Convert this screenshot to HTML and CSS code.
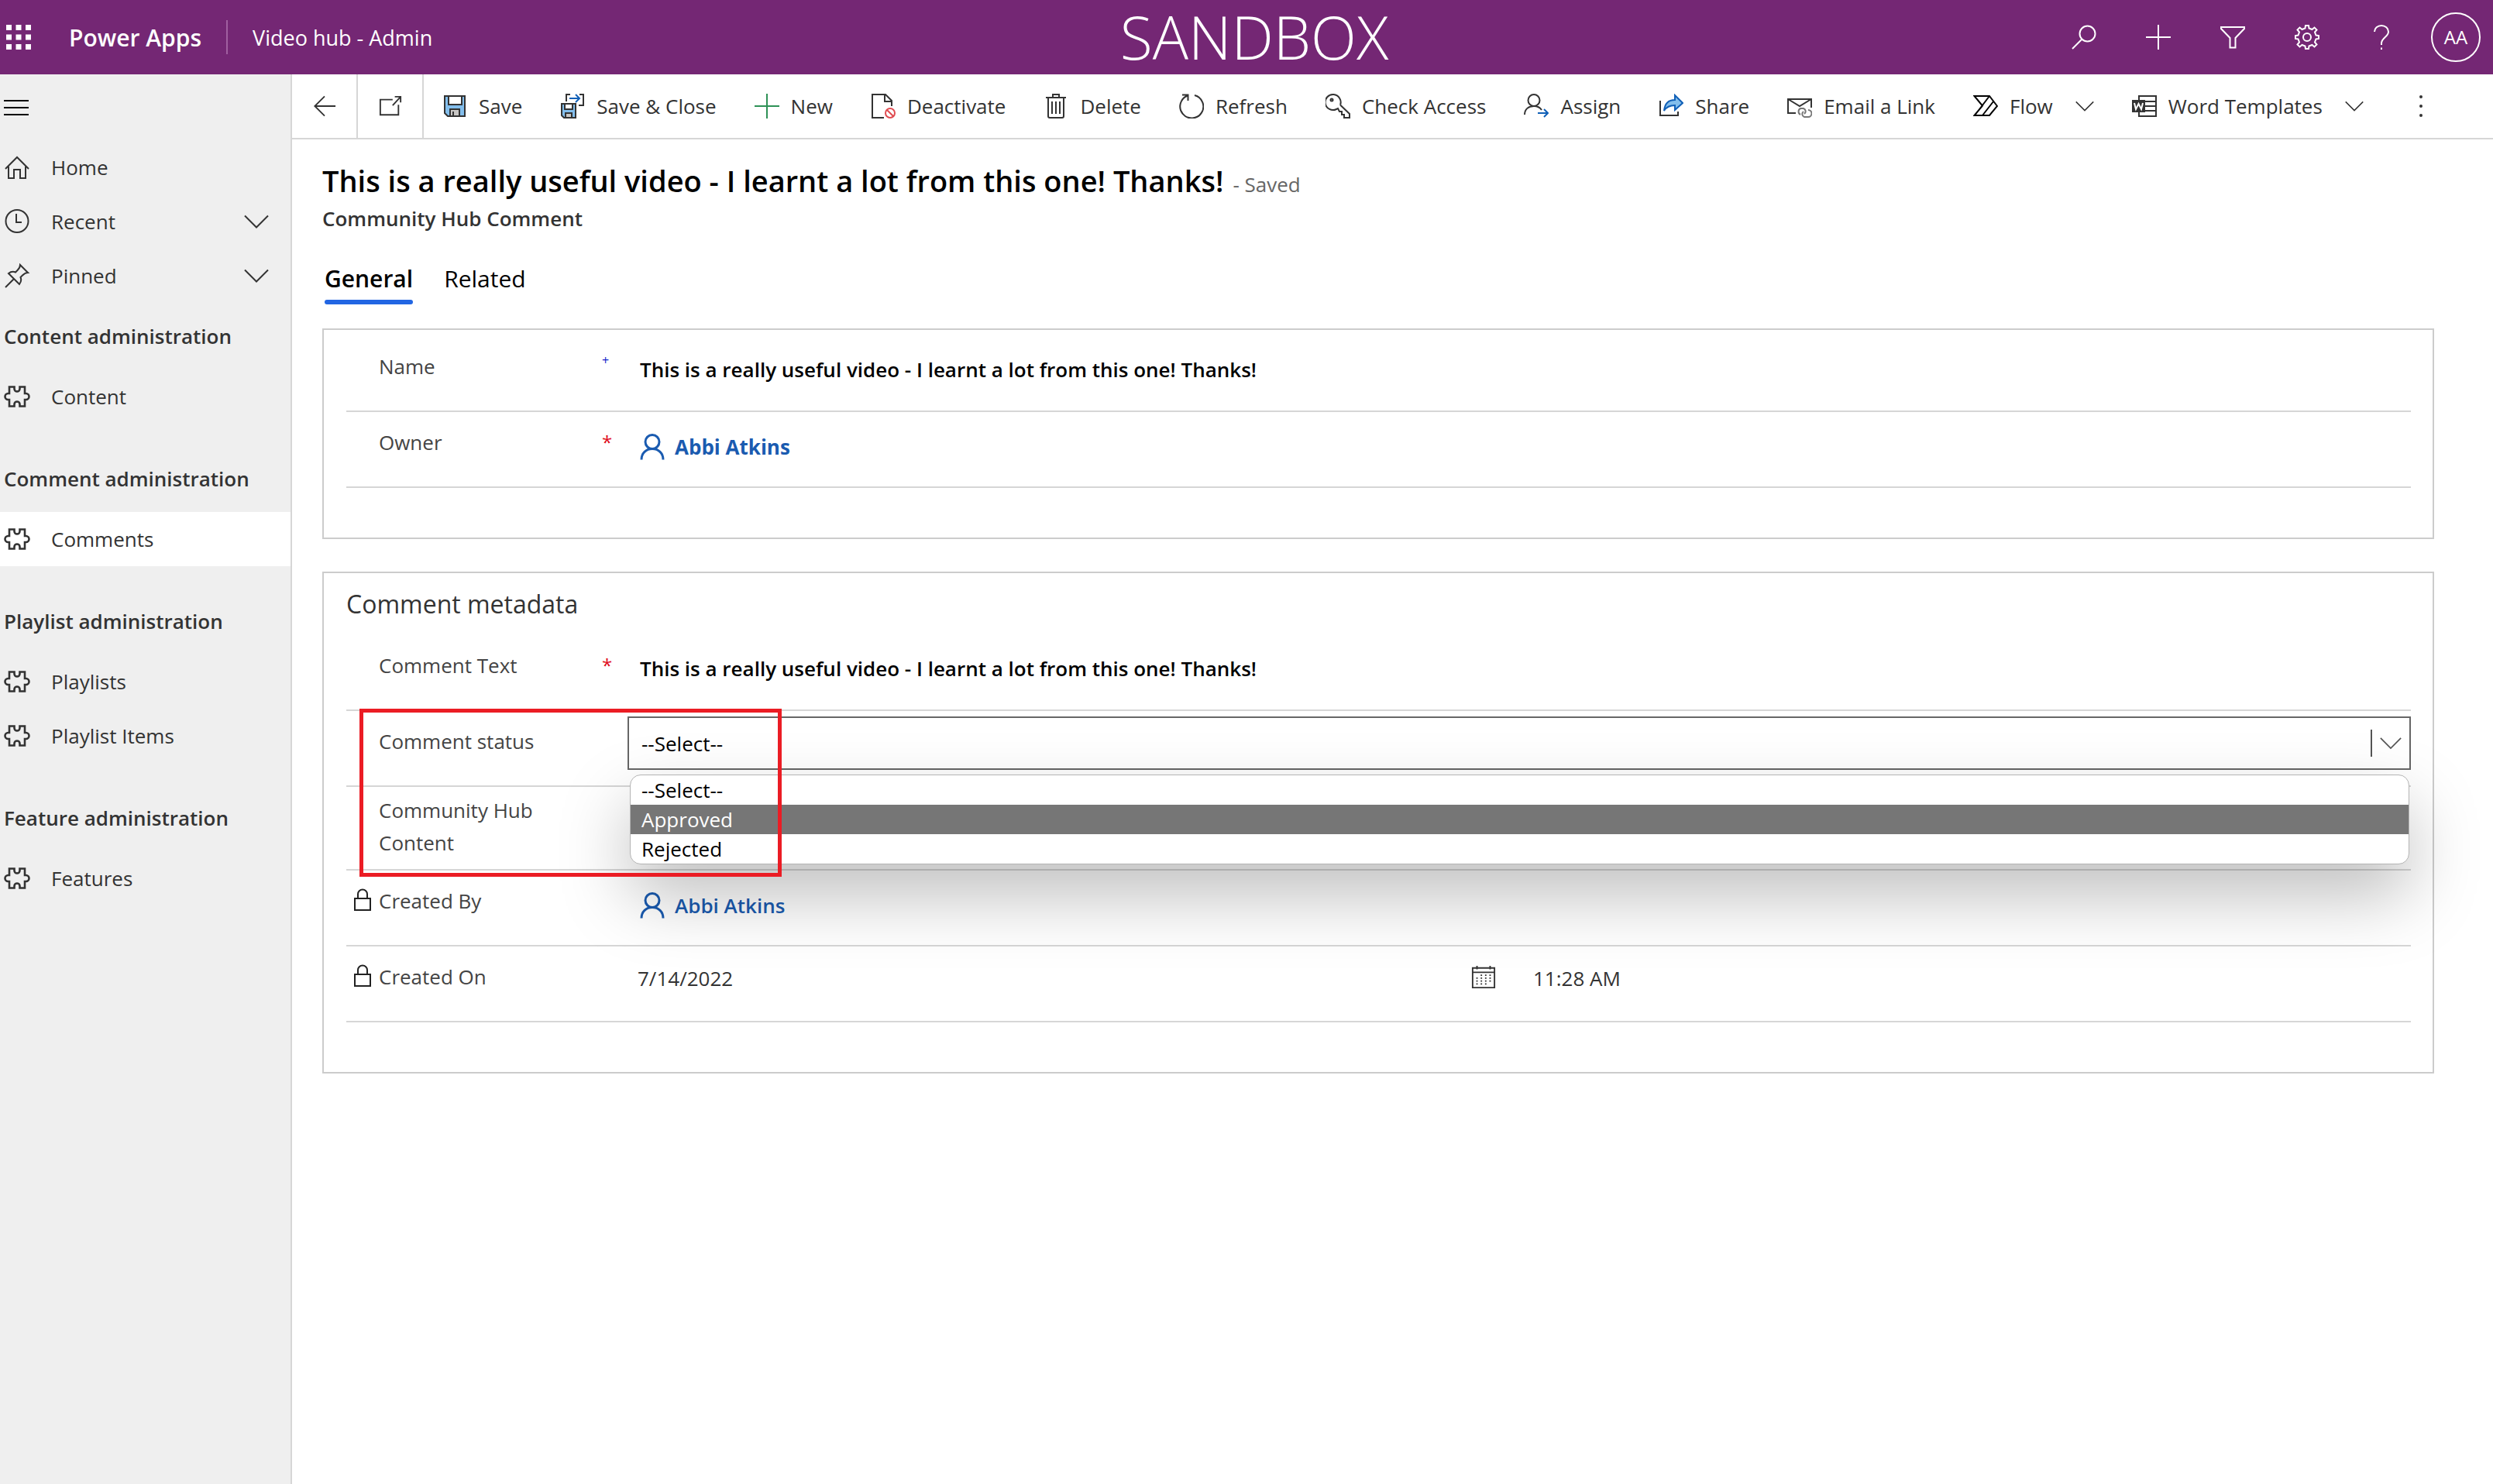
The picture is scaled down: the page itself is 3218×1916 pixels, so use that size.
FILE: index.html
```html
<!DOCTYPE html>
<html lang="en">
<head>
<meta charset="utf-8">
<title>Video hub - Admin</title>
<link rel="stylesheet" href="styles.css">
</head>
<body>
<svg class="sprite" aria-hidden="true">
  <symbol id="puzzle" viewBox="0 0 34 32"><path d="M7 3.500H13.500V6A3.500 3.500 0 0 0 20.500 6V3.500H27V12H28.500A3.800 3.800 0 0 1 28.500 20H27V28.500H20.500V26A3.500 3.500 0 0 0 13.500 26V28.500H7V20H5.500A3.800 3.800 0 0 1 5.500 12H7Z" stroke-width="2.600"/></symbol>
  <symbol id="chevron" viewBox="0 0 32 32"><path d="M1 8.500L16 23.500L31 8.500"/></symbol>
  <symbol id="person" viewBox="0 0 32 34"><circle cx="16" cy="10.500" r="9"/><path d="M2 33.500C2 25 8 19.500 16 19.500S30 25 30 33.500"/></symbol>
  <symbol id="lock" viewBox="0 0 22 30"><path d="M1 13H21V28H1ZM5 13V7.500A6 6 0 0 1 17 7.500V13"/></symbol>
</svg>

<header class="topbar">
  <button class="icon-btn waffle" aria-label="App launcher"><svg class="solid" viewBox="0 0 32 32"><path d="M0 0h7v7H0zM12.500 0h7v7h-7zM25 0h7v7h-7zM0 12.500h7v7H0zM12.500 12.500h7v7h-7zM25 12.500h7v7h-7zM0 25h7v7H0zM12.500 25h7v7h-7zM25 25h7v7h-7z"/></svg></button>
  <a class="brand" href="#">Power Apps</a>
  <a class="app-name" href="#">Video hub - Admin</a>
  <span class="env">SANDBOX</span>
  <nav class="tools">
    <button class="icon-btn" aria-label="Search"><svg viewBox="0 0 32 32"><circle cx="20.500" cy="11.500" r="10"/><path d="M13.500 18.500L1 31"/></svg></button>
    <button class="icon-btn" aria-label="New"><svg viewBox="0 0 32 32"><path d="M16 0V32M0 16H32"/></svg></button>
    <button class="icon-btn" aria-label="Filter"><svg viewBox="0 0 32 32"><path d="M1 3H31V5L19.500 17V29.500H12.500V17L1 5Z"/></svg></button>
    <button class="icon-btn" aria-label="Settings"><svg viewBox="0 0 32 32"><circle cx="16" cy="16" r="5"/><path d="M13.500 4.500L14 1H18L18.500 4.500L22.500 6L25.500 3.500L28.500 6.500L26 9.500L27.500 13.500L31 14V18L27.500 18.500L26 22.500L28.500 25.500L25.500 28.500L22.500 26L18.500 27.500L18 31H14L13.500 27.500L9.500 26L6.500 28.500L3.500 25.500L6 22.500L4.500 18.500L1 18V14L4.500 13.500L6 9.500L3.500 6.500L6.500 3.500L9.500 6Z"/></svg></button>
    <button class="icon-btn" aria-label="Help"><svg viewBox="0 0 32 32"><path d="M7 9A9 8 0 0 1 25 9C25 15.500 16 16.500 16 24V26M16 29.500V32"/></svg></button>
    <button class="avatar" aria-label="Account">AA</button>
  </nav>
</header>

<div class="shell">
  <nav class="sidebar">
    <button class="menu-btn" aria-label="Site map"><svg viewBox="0 0 32 20"><path d="M0 1H32M0 10H32M0 19H32"/></svg></button>
    <a class="nav-item" href="#"><svg viewBox="0 0 34 32"><path d="M2 18L17 3L32 18M6 15V30H13V19H21V30H28V15"/></svg>Home</a>
    <a class="nav-item" href="#"><svg viewBox="0 0 34 32"><circle cx="17" cy="15.500" r="14.500"/><path d="M16 6V17H23"/></svg>Recent<svg class="caret" viewBox="0 0 32 32"><use href="#chevron"/></svg></a>
    <a class="nav-item" href="#"><svg viewBox="0 0 34 32"><path d="M21 2L31 12C28 12 26.500 13 24 15.500L21.500 18C23 21.500 22 24.500 20 27L6 13C8.500 11 11.500 10 15 11.500L17.500 9C20 6.500 21 5 21 2ZM13 20L2 31"/></svg>Pinned<svg class="caret" viewBox="0 0 32 32"><use href="#chevron"/></svg></a>
    <h2>Content administration</h2>
    <a class="nav-item" href="#"><svg><use href="#puzzle"/></svg>Content</a>
    <h2>Comment administration</h2>
    <a class="nav-item current" href="#"><svg><use href="#puzzle"/></svg>Comments</a>
    <h2>Playlist administration</h2>
    <a class="nav-item" href="#"><svg><use href="#puzzle"/></svg>Playlists</a>
    <a class="nav-item" href="#"><svg><use href="#puzzle"/></svg>Playlist Items</a>
    <h2>Feature administration</h2>
    <a class="nav-item" href="#"><svg><use href="#puzzle"/></svg>Features</a>
  </nav>

  <main class="main">
    <div class="commands">
      <button class="square" aria-label="Back"><svg viewBox="0 0 32 32"><path d="M31 16H3M16 2.500L2.500 16L16 29.500"/></svg></button>
      <button class="square" aria-label="Open in new window"><svg viewBox="0 0 32 32"><path d="M19 7H2V28H27V14M19 15L30 3M22 3H30V11"/></svg></button>
      <button class="cmd"><svg viewBox="0 0 32 32"><path class="sky" d="M3 3H29V29H7L3 25Z"/><path class="white" d="M8 3H25V14H8Z"/><path class="grey" d="M10 20H22V29H10Z"/><path d="M14 23V29"/></svg>Save</button>
      <button class="cmd"><svg viewBox="0 0 32 32"><path class="sky" d="M2 13H20V31H5L2 28Z"/><path class="white" d="M6 13H16V20H6Z"/><path class="grey" d="M7 25H15V31H7Z"/><path d="M8 10V1H13M25 1H30V15H24"/><path class="blue" d="M12 6H25M20 1L25 6L20 11"/></svg>Save &amp; Close</button>
      <button class="cmd"><svg class="green" viewBox="0 0 32 32"><path d="M16 0V32M0 16H32"/></svg>New</button>
      <button class="cmd"><svg viewBox="0 0 32 32"><path d="M17 31H2V1H19L27 9V16M18 1V10H27"/><g class="red"><circle cx="25" cy="25" r="6"/><path d="M21 21L29 29"/></g></svg>Deactivate</button>
      <button class="cmd"><svg viewBox="0 0 32 32"><path d="M3 5H29M6 5V29Q6 31 8 31H24Q26 31 26 29V5M12 5V1H20V5M11 10V26M16 10V26M21 10V26"/></svg>Delete</button>
      <button class="cmd"><svg viewBox="0 0 32 32"><path d="M20 2A15 15 0 1 1 11 2.500M4 1.500H11.500V9"/></svg>Refresh</button>
      <button class="cmd"><svg viewBox="0 0 32 32"><path d="M19 14.500A10 10 0 1 0 14 20L16 19L18 23H21V27H24V31H31V26L19 14.500"/><circle cx="8" cy="8" r="1.500"/></svg>Check Access</button>
      <button class="cmd"><svg viewBox="0 0 32 32"><circle cx="13" cy="8.500" r="7.500"/><path d="M1 27C1 20 6 16 13 16C18 16 21 18 23 21"/><path class="blue" d="M18 25H31M26 20L31 25L26 30"/></svg>Assign</button>
      <button class="cmd"><svg viewBox="0 0 32 32"><path d="M2 9V28H25V23"/><path class="blue sky" d="M7 22C8 12 13 8 21 8V2L31 12L21 21V15C14 15 10 17 7 22Z"/></svg>Share</button>
      <button class="cmd"><svg viewBox="0 0 32 32"><path d="M11 25H1V7H31V18M1 7L16 16L31 7"/><path class="dim" d="M17 27A4.500 4.500 0 0 1 17 19H21A4 4 0 0 1 22 26M27 21A4.500 4.500 0 0 1 27 30H22A4 4 0 0 1 21 23"/></svg>Email a Link</button>
      <button class="cmd"><svg class="ink" viewBox="0 0 32 32"><path d="M1.500 3H21L31 16L21 28H1.500L12 15.500ZM21 3L2 28M26.500 9.500L12 28"/></svg>Flow<svg class="drop" viewBox="0 0 32 32"><use href="#chevron"/></svg></button>
      <button class="cmd"><svg viewBox="0 0 32 32"><path d="M9 9V3H31V29H9V23M14 10H31M17 16H31M14 22H31"/><path class="fill" d="M0 8H17V24H0Z"/><path class="reverse" d="M3 12L5 20L8.500 13L12 20L14 12"/></svg>Word Templates<svg class="drop" viewBox="0 0 32 32"><use href="#chevron"/></svg></button>
      <button class="more" aria-label="More commands"><svg class="solid" viewBox="0 0 32 32"><circle cx="16" cy="4" r="2"/><circle cx="16" cy="16" r="2"/><circle cx="16" cy="28" r="2"/></svg></button>
    </div>

    <div class="page">
      <div class="title-line"><h1>This is a really useful video - I learnt a lot from this one! Thanks!</h1><span class="saved">- Saved</span></div>
      <p class="entity">Community Hub Comment</p>
      <div class="tabs" role="tablist">
        <button class="tab active" role="tab" aria-selected="true">General</button>
        <button class="tab" role="tab" aria-selected="false">Related</button>
      </div>

      <section class="card">
        <div class="row">
          <label class="label" for="name">Name</label><span class="mark plus">+</span>
          <input class="value strong" id="name" value="This is a really useful video - I learnt a lot from this one! Thanks!">
        </div>
        <div class="row">
          <span class="label">Owner</span><span class="mark">*</span>
          <a class="value user bold" href="#"><svg viewBox="0 0 32 34"><use href="#person"/></svg>Abbi Atkins</a>
        </div>
      </section>

      <section class="card meta">
        <h2>Comment metadata</h2>
        <div class="row">
          <label class="label" for="text">Comment Text</label><span class="mark">*</span>
          <input class="value strong" id="text" value="This is a really useful video - I learnt a lot from this one! Thanks!">
        </div>
        <div class="highlight">
          <div class="row">
            <label class="label" for="status">Comment status</label>
            <div class="picker">
              <select id="status"><option>--Select--</option><option>Approved</option><option>Rejected</option></select>
              <svg class="arrow" viewBox="0 0 32 32"><use href="#chevron"/></svg>
              <ul class="options" role="listbox" aria-label="Comment status">
                <li role="option">--Select--</li>
                <li role="option" class="hover" aria-selected="true">Approved</li>
                <li role="option">Rejected</li>
              </ul>
            </div>
          </div>
          <div class="row tall"><span class="label">Community Hub Content</span></div>
        </div>
        <div class="row">
          <svg class="lock" viewBox="0 0 22 30"><use href="#lock"/></svg>
          <span class="label">Created By</span>
          <a class="value user" href="#"><svg viewBox="0 0 32 34"><use href="#person"/></svg>Abbi Atkins</a>
        </div>
        <div class="row">
          <svg class="lock" viewBox="0 0 22 30"><use href="#lock"/></svg>
          <span class="label">Created On</span>
          <div class="when"><span class="date">7/14/2022</span><svg viewBox="0 0 34 32"><path d="M2 4H32V31H2ZM2 10H32M8 1V6M26 1V6"/><path class="dots" d="M13 14H29M7 18H29M7 22H29M7 26H23"/></svg><span>11:28 AM</span></div>
        </div>
      </section>
    </div>
  </main>
</div>
</body>
</html>
```
FILE: styles.css
```css
*, *::before, *::after { box-sizing: border-box; }
body {
  margin: 0;
  min-height: 100vh;
  display: flex;
  flex-direction: column;
  font: 26px/42px "Open Sans", "Noto Sans", sans-serif;
  color: #333;
  background: #fff;
}
h1, h2, p, ul { margin: 0; padding: 0; list-style: none; }
a { color: inherit; text-decoration: none; }
button, input, select { font: inherit; color: inherit; background: none; border: 0; padding: 0; margin: 0; }
svg { width: 32px; height: 32px; flex: none; fill: none; stroke: currentColor; stroke-width: 2; }
.sprite { position: absolute; width: 0; height: 0; }
.solid { fill: currentColor; stroke: none; }

.topbar {
  position: relative;
  height: 96px;
  display: flex;
  align-items: center;
  padding: 0 16px 0 8px;
  color: #fff;
  background: #742774;
}
.icon-btn { display: flex; }
.brand { font-size: 30px; font-weight: 600; margin-left: 49px; padding-right: 32px; padding-top: 2px; }
.app-name { font-size: 27px; border-left: 2px solid #a05fa0; padding-left: 32px; padding-top: 2px; }
.env {
  position: absolute;
  left: 20px;
  right: 0;
  text-align: center;
  font-size: 77px;
  font-weight: 300;
  line-height: 96px;
  pointer-events: none;
}
.tools { display: flex; align-items: center; gap: 64px; margin-left: auto; }
.avatar { width: 64px; height: 64px; margin-left: -16px; border: 2px solid #fff; border-radius: 50%; font-size: 24px; }

.shell { flex: 1; display: flex; }
.sidebar { width: 377px; flex: none; background: #efefef; border-right: 2px solid #d6d6d6; }
.menu-btn { display: flex; height: 85px; padding: 33px 5px; color: #000; }
.menu-btn svg { height: 20px; }
.nav-item { display: flex; align-items: center; gap: 27px; height: 70px; padding: 0 28px 0 5px; }
.nav-item svg { width: 34px; }
.nav-item .caret { width: 32px; margin-left: auto; }
.nav-item.current { background: #fff; }
.sidebar h2 { padding: 22px 0 22px 5px; margin-top: 28px; font-size: 26px; font-weight: 600; line-height: 42px; }
.nav-item:nth-of-type(3) + h2 { margin-top: 0; }

.main { flex: 1; min-width: 0; }
.commands { display: flex; height: 84px; border-bottom: 2px solid #d6d6d6; }
.square { width: 85px; display: flex; align-items: center; justify-content: center; border-right: 2px solid #d6d6d6; }
.square svg { width: 30px; height: 30px; }
.cmd { display: flex; align-items: center; gap: 15px; padding: 0 25px 0 24px; white-space: nowrap; }
.drop { width: 24px; height: 24px; margin-left: 14px; }
.more { display: flex; align-items: center; margin-left: auto; margin-right: 77px; }
.sky { fill: #83beec; }
.white { fill: #fff; }
.grey { fill: #c8c6c4; }
.blue { stroke: #1160b7; }
.green { stroke: #2e9156; }
.red { stroke: #e04b50; }
.dim { stroke: #777; }
.ink { stroke: #000; }
.fill { fill: #333; stroke: none; }
.reverse { stroke: #fff; }

.page { padding: 30px 76px 0 39px; }
.title-line { display: flex; align-items: baseline; gap: 12px; line-height: 46px; }
h1 { font-size: 38px; font-weight: 600; color: #000; }
.saved { color: #666; }
.entity { font-weight: 600; line-height: 42px; }
.tabs { display: flex; gap: 40px; margin: 34px 0 31px 3px; }
.tab { font-size: 30px; line-height: 46px; color: #000; }
.tab.active { font-weight: 600; }
.tab::after { content: ""; display: block; height: 6px; margin-top: 4px; border-radius: 3px; }
.tab.active::after { background: #2266e3; }

.card { border: 2px solid #ccc; padding: 8px 28px 64px 29px; }
.card + .card { margin-top: 42px; }
.card.meta { padding-top: 18px; }
.card h2 { font-size: 32px; font-weight: 400; line-height: 44px; padding-bottom: 18px; }
.row {
  display: grid;
  grid-template-columns: 42px 288px 33px 1fr;
  min-height: 98px;
  border-bottom: 2px solid #d6d6d6;
}
.label { grid-column: 2; grid-row: 1; padding-top: 18px; max-width: 240px; color: #444; }
.tall .label { padding: 9px 0 13px; }
.mark { grid-column: 3; grid-row: 1; padding-top: 18px; color: #e00b1c; font-size: 24px; }
.plus { font-size: 16px; padding-top: 10px; color: #1220c8; }
.value { grid-column: 4; grid-row: 1; height: 42px; margin-top: 24px; padding: 0 16px; min-width: 0; }
.strong { margin-top: 22px; font-weight: 600; color: #000; }
.user { display: flex; align-items: center; gap: 13px; font-weight: 600; color: #1a5bb0; }
.bold { font-weight: 700; }
.user svg { height: 34px; stroke-width: 3; }
.lock { grid-column: 1; grid-row: 1; width: 22px; height: 30px; margin: 23px 0 0 10px; color: #222; }
.picker { grid-column: 4; position: relative; height: 69px; margin-top: 7px; }
.picker select {
  width: 100%;
  height: 100%;
  padding: 0 16px;
  border: 2px solid #666;
  border-radius: 0;
  appearance: none;
  color: #000;
}
.arrow {
  position: absolute;
  right: 12px;
  top: 17px;
  width: 40px;
  height: 35px;
  padding-left: 10px;
  border-left: 2px solid #555;
  color: #555;
}
.options {
  position: absolute;
  z-index: 1;
  top: 75px;
  left: 3px;
  right: 2px;
  overflow: hidden;
  border: 1px solid #b4b4b4;
  border-radius: 14px;
  line-height: 38px;
  color: #000;
  background: #fff;
  box-shadow: 0 40px 90px rgba(0, 0, 0, .26);
}
.options li { padding: 0 14px; }
.options .hover { color: #fff; background: #767676; }
.highlight { position: relative; }
.highlight::after {
  content: "";
  position: absolute;
  z-index: 2;
  left: 17px;
  top: -3px;
  bottom: -8px;
  width: 545px;
  border: 5px solid #eb1c24;
  pointer-events: none;
}
.when { grid-column: 4; display: grid; grid-template-columns: 1076px 80px 1fr; align-items: start; padding: 20px 0 0 13px; }
.when svg { margin-top: 3px; }
.dots { stroke-width: 2; stroke-dasharray: 2 4; }
```
